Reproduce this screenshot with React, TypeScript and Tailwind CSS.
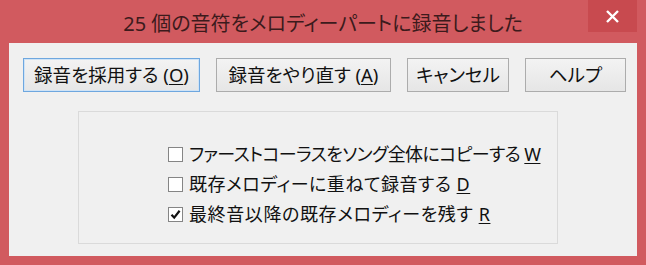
import React from "react";

const jp = "font-['Noto_Sans','Noto_Sans_CJK_JP',sans-serif] [font-feature-settings:'palt']";

function Btn({ children, w, primary }: { children: React.ReactNode; w: string; primary?: boolean }) {
  return (
    <button
      className={
        primary
          ? `${w} h-[34px] border border-[#6ea7df] bg-gradient-to-b from-[#f3f3f3] to-[#e6e6e6] shadow-[inset_0_0_0_1px_#cfe3f6] text-[18.5px] text-[#111] flex items-center justify-center`
          : `${w} h-[34px] border border-[#acacac] bg-gradient-to-b from-[#f3f3f3] to-[#e6e6e6] text-[18.5px] text-[#111] flex items-center justify-center`
      }
    >
      {children}
    </button>
  );
}

function Check({ checked, label, acc, track }: { checked?: boolean; label: string; acc: string; track: string }) {
  return (
    <div className="h-[30px] flex items-center">
      <div className="w-[15px] h-[15px] shrink-0 border border-[#858585] bg-white flex items-center justify-center">
        {checked && (
          <svg width="11" height="11" viewBox="0 0 11 11">
            <path d="M1.5 5.8 L4.2 8.6 L9.6 1.8" fill="none" stroke="#111" strokeWidth="2.2" />
          </svg>
        )}
      </div>
      <span className={`ml-[6px] whitespace-nowrap text-[18px] text-[#111] leading-none ${track}`}>
        {label} <span className="underline underline-offset-2">{acc}</span>
      </span>
    </div>
  );
}

export default function App() {
  return (
    <div className={`w-[646px] h-[265px] bg-[#d15a5f] flex flex-col px-[9px] pb-[9px] ${jp}`}>
      <div className="h-[43px] grid grid-cols-[1fr_auto_1fr] -mx-[9px]">
        <div></div>
        <div className="h-[43px] flex items-center pt-[4px] text-[20px] text-[#3c1a1c]">
          25 個の音符をメロディーパートに録音しました
        </div>
        <div className="flex justify-end pr-[9px]">
          <div className="w-[49px] h-[32px] bg-[#c84a4f] flex items-center justify-center">
            <svg width="15" height="15" viewBox="0 0 15 15">
              <path d="M2 2 L13 13 M13 2 L2 13" stroke="#fff" strokeWidth="2.4" />
            </svg>
          </div>
        </div>
      </div>
      <div className="flex-1 bg-[#f0f0f0] pl-[14px] pr-[11px] pt-[15px]">
        <div className="flex gap-[16px]">
          <Btn w="w-[177px]" primary>
            録音を採用する (<span className="underline underline-offset-2">O</span>)
          </Btn>
          <Btn w="w-[175px]">
            録音をやり直す (<span className="underline underline-offset-2">A</span>)
          </Btn>
          <Btn w="w-[102px]">キャンセル</Btn>
          <Btn w="w-[101px]">ヘルプ</Btn>
        </div>
        <div className="ml-[55px] mt-[19px] w-[480px] h-[133px] border border-[#dadada] pl-[89px] pt-[27px]">
          <Check track="tracking-[-0.6px]" label="ファーストコーラスをソング全体にコピーする" acc="W" />
          <Check track="tracking-[0.5px]" label="既存メロディーに重ねて録音する" acc="D" />
          <Check checked track="tracking-[0.6px]" label="最終音以降の既存メロディーを残す" acc="R" />
        </div>
      </div>
    </div>
  );
}
